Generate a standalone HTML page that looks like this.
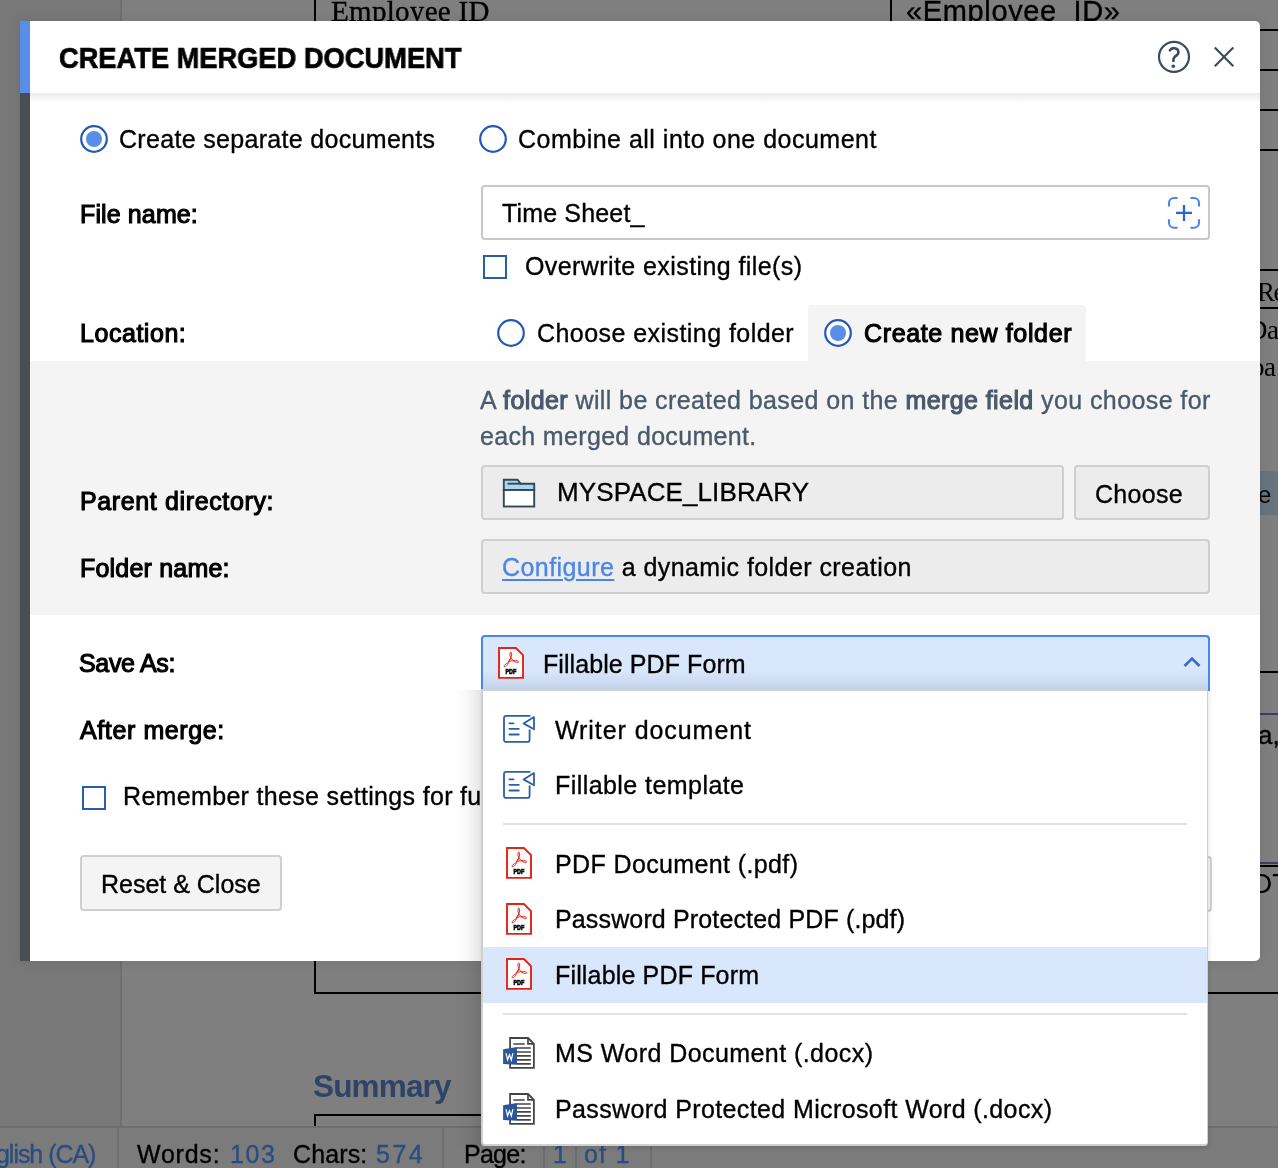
<!DOCTYPE html>
<html><head><meta charset="utf-8">
<style>
html,body{margin:0;padding:0;}
body{width:1278px;height:1168px;position:relative;overflow:hidden;background:#7f7f7f;font-family:"Liberation Sans",sans-serif;}
.t{position:absolute;white-space:pre;line-height:1;will-change:transform;}
.abs{position:absolute;}
.sb{font-weight:400;-webkit-text-stroke:1.1px currentColor;}
.hl{position:absolute;height:2px;background:#000;}
.vl{position:absolute;width:2px;background:#000;}
</style></head><body>
<!-- background canvas -->
<div class="abs" style="left:0;top:0;width:121px;height:1127px;background:#787878"></div>
<div class="abs" style="left:120px;top:0;width:2px;height:1127px;background:#6f6f6f"></div>
<div class="vl" style="left:314px;top:0;height:993px"></div>
<div class="vl" style="left:890px;top:0;height:30px"></div>
<div class="hl" style="left:314px;top:29px;width:964px"></div>
<div class="hl" style="left:314px;top:69px;width:964px"></div>
<div class="hl" style="left:314px;top:109px;width:964px"></div>
<div class="hl" style="left:314px;top:149px;width:964px"></div>
<div class="hl" style="left:314px;top:269px;width:964px"></div>
<div class="hl" style="left:1260px;top:307px;width:18px"></div>
<div class="abs" style="left:1260px;top:471px;width:18px;height:44px;background:#67737d"></div>
<div class="hl" style="left:314px;top:671px;width:964px"></div>
<div class="hl" style="left:1260px;top:713px;width:18px;background:#3e3a6a"></div>
<div class="hl" style="left:1260px;top:862px;width:18px;background:#3e3a6a"></div>
<div class="hl" style="left:1260px;top:865px;width:18px"></div>
<div class="hl" style="left:314px;top:992px;width:964px"></div>
<div class="hl" style="left:314px;top:1114px;width:700px"></div>
<div class="vl" style="left:314px;top:1114px;height:13px"></div>
<div class="t" style="left:1257px;top:278.5px;font-family:'Liberation Serif',serif;font-size:27px;letter-spacing:-1.5px">Re</div>
<div class="t" style="left:1248px;top:316.6px;font-family:'Liberation Serif',serif;font-size:27px;letter-spacing:-0.5px">Da</div>
<div class="t" style="left:1251px;top:354.4px;font-family:'Liberation Serif',serif;font-size:27px;letter-spacing:-0.5px">pa</div>
<div class="t" style="left:1258px;top:483px;font-family:'Liberation Sans',sans-serif;font-size:24px;letter-spacing:-1px">e I</div>
<div class="t" style="left:1258px;top:722px;font-family:'Liberation Sans',sans-serif;font-size:26px;-webkit-text-stroke:0.4px #000">a,</div>
<div class="t" style="left:1252px;top:870px;font-family:'Liberation Sans',sans-serif;font-size:28px;">DT</div>
<div class='t' id='bg1' style='left:330.5px;top:-2.8px;font-size:29px;font-weight:400;color:#000;font-family:"Liberation Serif", serif;letter-spacing:0.308px;-webkit-text-stroke:0.35px currentColor;'>Employee ID</div>
<div class='t' id='bg2' style='left:906.0px;top:-3.0px;font-size:29px;font-weight:400;color:#000;font-family:"Liberation Sans", sans-serif;letter-spacing:0.638px;-webkit-text-stroke:0.35px currentColor;'>«Employee_ID»</div>
<div class='t' id='bg3' style='left:313.0px;top:1071.3px;font-size:31.5px;font-weight:700;color:#2d4468;font-family:"Liberation Sans", sans-serif;letter-spacing:-0.846px;'>Summary</div>
<!-- status bar -->
<div class="abs" style="left:0;top:1126px;width:1278px;height:42px;background:#7b7b7b;border-top:2px solid #6e6e6e"></div>
<div class="abs" style="left:117px;top:1127px;width:2px;height:41px;background:#6e6e6e"></div>
<div class="abs" style="left:442px;top:1127px;width:2px;height:41px;background:#6e6e6e"></div>
<div class="abs" style="left:543px;top:1127px;width:2px;height:41px;background:#6e6e6e"></div>
<div class="abs" style="left:575px;top:1127px;width:2px;height:41px;background:#6e6e6e"></div>
<div class="abs" style="left:650px;top:1127px;width:2px;height:41px;background:#6e6e6e"></div>
<div class='t' id='st1' style='left:-4.5px;top:1141.8px;font-size:25px;font-weight:400;color:#2b4c80;font-family:"Liberation Sans", sans-serif;letter-spacing:-1.039px;-webkit-text-stroke:0.35px currentColor;'>glish (CA)</div>
<div class='t' id='st2' style='left:136.8px;top:1141.8px;font-size:25px;font-weight:400;color:#000;font-family:"Liberation Sans", sans-serif;letter-spacing:0.773px;-webkit-text-stroke:0.35px currentColor;'>Words:</div>
<div class='t' id='st3' style='left:229.8px;top:1141.8px;font-size:25px;font-weight:400;color:#2b4c80;font-family:"Liberation Sans", sans-serif;letter-spacing:1.591px;-webkit-text-stroke:0.35px currentColor;'>103</div>
<div class='t' id='st4' style='left:293.4px;top:1141.8px;font-size:25px;font-weight:400;color:#000;font-family:"Liberation Sans", sans-serif;letter-spacing:0.132px;-webkit-text-stroke:0.35px currentColor;'>Chars:</div>
<div class='t' id='st5' style='left:376.0px;top:1141.8px;font-size:25px;font-weight:400;color:#2b4c80;font-family:"Liberation Sans", sans-serif;letter-spacing:2.491px;-webkit-text-stroke:0.35px currentColor;'>574</div>
<div class='t' id='st6' style='left:463.5px;top:1141.8px;font-size:25px;font-weight:400;color:#000;font-family:"Liberation Sans", sans-serif;letter-spacing:-0.736px;-webkit-text-stroke:0.35px currentColor;'>Page:</div>
<div class='t' id='st7' style='left:552.5px;top:1141.8px;font-size:25px;font-weight:400;color:#2b4c80;font-family:"Liberation Sans", sans-serif;letter-spacing:1.094px;-webkit-text-stroke:0.35px currentColor;'>1</div>
<div class='t' id='st8' style='left:584.2px;top:1141.8px;font-size:25px;font-weight:400;color:#2b4c80;font-family:"Liberation Sans", sans-serif;letter-spacing:1.199px;-webkit-text-stroke:0.35px currentColor;'>of 1</div>

<!-- dialog -->
<div class="abs" style="left:20px;top:21px;width:1240px;height:940px;background:#fff;border-radius:0 5px 5px 0;box-shadow:0 0 12px rgba(0,0,0,0.10);overflow:hidden">
  <div class="abs" style="left:0;top:0;width:10px;height:72px;background:#588ee9"></div>
  <div class="abs" style="left:0;top:72px;width:10px;height:868px;background:#4a4e52"></div>
  <div class="abs" style="left:10px;top:72px;width:1230px;height:10px;background:linear-gradient(#ececec,rgba(255,255,255,0))"></div>
  <div class="abs" style="left:10px;top:339.5px;width:1230px;height:254.5px;background:#f4f4f4"></div>
  <div class="abs" style="left:788px;top:284px;width:278px;height:60px;background:#f4f4f4;border-radius:4px 4px 0 0"></div>
</div>
<div class='t' id='title' style='left:59.1px;top:43.0px;font-size:29.5px;font-weight:700;color:#000;font-family:"Liberation Sans", sans-serif;letter-spacing:0.000px;-webkit-text-stroke:0.7px currentColor;transform:scaleX(0.9242);transform-origin:0 0;'>CREATE MERGED DOCUMENT</div>
<!-- help + close icons -->
<svg class="abs" style="left:1150px;top:35px" width="100" height="50" viewBox="0 0 100 50">
  <circle cx="24" cy="21.8" r="15" fill="none" stroke="#3d4c5e" stroke-width="2.2"/>
  <path d="M19.9 15.3 C21 13.6 23 13 24.5 13.2 C27 13.5 28.4 15 28.4 17.2 C28.4 19.5 26.5 20.6 25 21.6 C23.8 22.5 23.4 23.5 23.4 25.3 V26" fill="none" stroke="#3d4c5e" stroke-width="2.6" stroke-linecap="round"/>
  <circle cx="23.3" cy="31.2" r="1.8" fill="#3d4c5e"/>
  <path d="M64.8 12.5 L83.3 31.3 M83.3 12.5 L64.8 31.3" stroke="#3d4c5e" stroke-width="2.2"/>
</svg>

<!-- radios row -->
<svg class="abs" style="left:78px;top:123px" width="32" height="32" viewBox="0 0 32 32"><circle cx="16" cy="16" r="12.8" fill="#fff" stroke="#2458b8" stroke-width="2.2"/><circle cx="16" cy="16" r="8" fill="#588ee9"/></svg>
<div class='t' id='r1' style='left:119.4px;top:127.1px;font-size:25px;font-weight:400;color:#000;font-family:"Liberation Sans", sans-serif;letter-spacing:0.316px;-webkit-text-stroke:0.35px currentColor;'>Create separate documents</div>
<svg class="abs" style="left:477px;top:123px" width="32" height="32" viewBox="0 0 32 32"><circle cx="16" cy="16" r="12.8" fill="#fff" stroke="#2458b8" stroke-width="2.2"/></svg>
<div class='t' id='r2' style='left:518.2px;top:127.1px;font-size:25px;font-weight:400;color:#000;font-family:"Liberation Sans", sans-serif;letter-spacing:0.491px;-webkit-text-stroke:0.35px currentColor;'>Combine all into one document</div>

<div class='t' id='l1' style='left:80.2px;top:201.5px;font-size:25px;font-weight:400;color:#000;font-family:"Liberation Sans", sans-serif;letter-spacing:0.120px;-webkit-text-stroke:1.1px currentColor;'>File name:</div>
<div class="abs" style="left:481px;top:185px;width:725px;height:51px;border:2px solid #c8c8c8;border-radius:4px;background:#fff"></div>
<div class='t' id='fn' style='left:502.1px;top:201.4px;font-size:25px;font-weight:400;color:#000;font-family:"Liberation Sans", sans-serif;letter-spacing:0.159px;-webkit-text-stroke:0.35px currentColor;'>Time Sheet_</div>
<svg class="abs" style="left:1160px;top:190px" width="48" height="46" viewBox="0 0 48 46">
  <g fill="none" stroke="#4a86e8" stroke-width="2.1" stroke-linecap="butt">
    <path d="M9 16.6 V13 a5 5 0 0 1 5 -5 H17.6"/>
    <path d="M30.4 8 H34 a5 5 0 0 1 5 5 V16.6"/>
    <path d="M9 29.2 V32.8 a5 5 0 0 0 5 5 H17.6"/>
    <path d="M30.4 37.8 H34 a5 5 0 0 0 5 -5 V29.2"/>
  </g>
  <path d="M16 22.9 H32 M24 15 V31" stroke="#2a64d2" stroke-width="2.3"/>
</svg>
<div class="abs" style="left:483px;top:255px;width:20px;height:20px;border:2px solid #2a5db0"></div>
<div class='t' id='ow' style='left:524.8px;top:253.5px;font-size:25px;font-weight:400;color:#000;font-family:"Liberation Sans", sans-serif;letter-spacing:0.415px;-webkit-text-stroke:0.35px currentColor;'>Overwrite existing file(s)</div>

<div class='t' id='l2' style='left:80.2px;top:320.6px;font-size:25px;font-weight:400;color:#000;font-family:"Liberation Sans", sans-serif;letter-spacing:0.541px;-webkit-text-stroke:1.1px currentColor;'>Location:</div>
<svg class="abs" style="left:495px;top:316.7px" width="32" height="32" viewBox="0 0 32 32"><circle cx="16" cy="16" r="12.8" fill="#fff" stroke="#2458b8" stroke-width="2.2"/></svg>
<div class='t' id='loc1' style='left:536.5px;top:320.7px;font-size:25px;font-weight:400;color:#000;font-family:"Liberation Sans", sans-serif;letter-spacing:0.444px;-webkit-text-stroke:0.35px currentColor;'>Choose existing folder</div>
<svg class="abs" style="left:822px;top:317px" width="32" height="32" viewBox="0 0 32 32"><circle cx="16" cy="16" r="12.8" fill="#fff" stroke="#2458b8" stroke-width="2.2"/><circle cx="16" cy="16" r="8" fill="#588ee9"/></svg>
<div class='t' id='loc2' style='left:863.5px;top:320.7px;font-size:25px;font-weight:400;color:#000;font-family:"Liberation Sans", sans-serif;letter-spacing:0.636px;-webkit-text-stroke:1.1px currentColor;'>Create new folder</div>

<div class='t' id='info1' style='left:480.2px;top:388.1px;font-size:25px;font-weight:400;color:#4a596b;font-family:"Liberation Sans", sans-serif;letter-spacing:0.408px;-webkit-text-stroke:0.35px currentColor;'>A <b class='sb'>folder</b> will be created based on the <b class='sb'>merge field</b> you choose for</div>
<div class='t' id='info2' style='left:480.2px;top:424.1px;font-size:25px;font-weight:400;color:#4a596b;font-family:"Liberation Sans", sans-serif;letter-spacing:0.335px;-webkit-text-stroke:0.35px currentColor;'>each merged document.</div>

<div class='t' id='l3' style='left:80.0px;top:488.9px;font-size:25px;font-weight:400;color:#000;font-family:"Liberation Sans", sans-serif;letter-spacing:0.630px;-webkit-text-stroke:1.1px currentColor;'>Parent directory:</div>
<div class="abs" style="left:481px;top:465px;width:579px;height:51px;border:2px solid #cfcfcf;border-radius:4px;background:#ececec"></div>
<svg class="abs" style="left:500px;top:476px" width="40" height="34" viewBox="0 0 40 34">
  <path d="M3.8 3.7 H17.5 L20.6 7.7 H34.2 V14 H3.8 Z" fill="#a9d6f2" stroke="#34475a" stroke-width="1.9" stroke-linejoin="miter"/>
  <path d="M7.5 7.7 H21" stroke="#34475a" stroke-width="1.9"/>
  <rect x="3.8" y="14" width="30.4" height="16.5" fill="#fff" stroke="#34475a" stroke-width="1.9"/>
</svg>
<div class='t' id='pd' style='left:556.5px;top:478.8px;font-size:26px;font-weight:400;color:#000;font-family:"Liberation Sans", sans-serif;letter-spacing:0.109px;-webkit-text-stroke:0.35px currentColor;'>MYSPACE_LIBRARY</div>
<div class="abs" style="left:1074px;top:465px;width:132px;height:51px;border:2px solid #cfcfcf;border-radius:4px;background:#ececec"></div>
<div class='t' id='choose' style='left:1095.3px;top:482.0px;font-size:25px;font-weight:400;color:#000;font-family:"Liberation Sans", sans-serif;letter-spacing:0.286px;-webkit-text-stroke:0.35px currentColor;'>Choose</div>

<div class='t' id='l4' style='left:80.0px;top:555.6px;font-size:25px;font-weight:400;color:#000;font-family:"Liberation Sans", sans-serif;letter-spacing:0.200px;-webkit-text-stroke:1.1px currentColor;'>Folder name:</div>
<div class="abs" style="left:481px;top:539px;width:725px;height:51px;border:2px solid #cfcfcf;border-radius:4px;background:#ececec"></div>
<div class='t' id='cfg' style='left:502.0px;top:555.2px;font-size:25px;font-weight:400;color:#000;font-family:"Liberation Sans", sans-serif;letter-spacing:0.433px;-webkit-text-stroke:0.35px currentColor;'><u style='color:#4a86e8;text-decoration-thickness:2px;text-underline-offset:3px'>Configure</u> a dynamic folder creation</div>

<div class='t' id='l5' style='left:79.1px;top:651.4px;font-size:25px;font-weight:400;color:#000;font-family:"Liberation Sans", sans-serif;letter-spacing:-0.325px;-webkit-text-stroke:1.1px currentColor;'>Save As:</div>
<div class="abs" style="left:481px;top:635px;width:725px;height:54px;border:2px solid #4a86e8;border-bottom:none;border-radius:4px 4px 0 0;background:linear-gradient(#d9e7fd 0%,#d9e7fd 62%,#c3d1e6 100%)"></div>
<svg class="abs" style="left:490px;top:639.6px" width="44" height="44" viewBox="0 0 44 44">
<path d="M9 8 H25.9 L33 15.1 V37.9 H9 Z" fill="#fff" stroke="#e42313" stroke-width="1.9"/>
<g fill="none" stroke="#e42313" stroke-width="0.95" stroke-linejoin="round"><path d="M20.8 17.8 C19.7 15.5 19.6 12 20.8 11.9 C22 12 21.9 15.5 20.8 17.8 L17.6 23.2 C16 23.6 13.6 25.2 14.2 26.7 C15.2 27.7 17.6 25 19.6 21 L20.8 17.8 L23.2 20.7 C25.5 22.6 28.2 23.2 28.6 22.1 C28.9 20.8 26.5 20.2 23.8 20.7 L19.6 21.1"/></g>
<text x="20.9" y="33.8" font-family="Liberation Sans" font-weight="700" font-size="7" text-anchor="middle" fill="#000" stroke="#000" stroke-width="0.6" textLength="11" lengthAdjust="spacingAndGlyphs">PDF</text></svg>
<div class='t' id='sa' style='left:543.4px;top:651.7px;font-size:25px;font-weight:400;color:#000;font-family:"Liberation Sans", sans-serif;letter-spacing:0.074px;-webkit-text-stroke:0.35px currentColor;'>Fillable PDF Form</div>
<svg class="abs" style="left:1176px;top:650px" width="32" height="24" viewBox="0 0 32 24">
  <path d="M8.5 16 L16 8.5 L23.5 16" fill="none" stroke="#3a6cc8" stroke-width="2.6"/>
</svg>

<div class='t' id='l6' style='left:80.0px;top:717.5px;font-size:25px;font-weight:400;color:#000;font-family:"Liberation Sans", sans-serif;letter-spacing:0.613px;-webkit-text-stroke:1.1px currentColor;'>After merge:</div>
<div class="abs" style="left:82px;top:786px;width:20px;height:20px;border:2px solid #2a5db0"></div>
<div class='t' id='rem' style='left:122.7px;top:784.1px;font-size:25px;font-weight:400;color:#000;font-family:"Liberation Sans", sans-serif;letter-spacing:0.328px;-webkit-text-stroke:0.35px currentColor;'>Remember these settings for fu</div>
<div class="abs" style="left:80px;top:855px;width:198px;height:52px;border:2px solid #cfcfcf;border-radius:4px;background:#f4f4f4"></div>
<div class='t' id='reset' style='left:101.2px;top:871.8px;font-size:25px;font-weight:400;color:#000;font-family:"Liberation Sans", sans-serif;letter-spacing:-0.008px;-webkit-text-stroke:0.35px currentColor;'>Reset &amp; Close</div>
<div class="abs" style="left:1100px;top:856px;width:108px;height:52px;border:2px solid #cfcfcf;border-radius:4px;background:#f4f4f4"></div>

<!-- dropdown -->
<div class="abs" style="left:456px;top:690px;width:25px;height:456px;background:linear-gradient(to right,rgba(0,0,0,0),rgba(0,0,0,0.03) 50%,rgba(0,0,0,0.10))"></div>
<div class="abs" style="left:481px;top:689px;width:724px;height:453px;background:#fff;border:2px solid #cfcfcf;border-top:2px solid #d2d2d2;border-right:1.5px solid #cfcfcf;border-bottom:2px solid #d0d0d0;border-radius:0 0 4px 4px;box-shadow:1px 2px 4px rgba(0,0,0,0.10)"></div>
<div class="abs" style="left:483px;top:947px;width:724px;height:56px;background:#d9e7fd"></div>
<div class="abs" style="left:503px;top:823px;width:684px;height:2px;background:#e2e2e2"></div>
<div class="abs" style="left:503px;top:1013px;width:684px;height:2px;background:#e2e2e2"></div>
<div class='t' id='m1' style='left:554.5px;top:717.6px;font-size:25px;font-weight:400;color:#000;font-family:"Liberation Sans", sans-serif;letter-spacing:0.933px;-webkit-text-stroke:0.35px currentColor;'>Writer document</div>
<div class='t' id='m2' style='left:554.5px;top:773.3px;font-size:25px;font-weight:400;color:#000;font-family:"Liberation Sans", sans-serif;letter-spacing:0.436px;-webkit-text-stroke:0.35px currentColor;'>Fillable template</div>
<div class='t' id='m3' style='left:554.5px;top:851.8px;font-size:25px;font-weight:400;color:#000;font-family:"Liberation Sans", sans-serif;letter-spacing:0.378px;-webkit-text-stroke:0.35px currentColor;'>PDF Document (.pdf)</div>
<div class='t' id='m4' style='left:554.5px;top:907.4px;font-size:25px;font-weight:400;color:#000;font-family:"Liberation Sans", sans-serif;letter-spacing:0.144px;-webkit-text-stroke:0.35px currentColor;'>Password Protected PDF (.pdf)</div>
<div class='t' id='m5' style='left:554.5px;top:963.0px;font-size:25px;font-weight:400;color:#000;font-family:"Liberation Sans", sans-serif;letter-spacing:0.161px;-webkit-text-stroke:0.35px currentColor;'>Fillable PDF Form</div>
<div class='t' id='m6' style='left:554.5px;top:1041.2px;font-size:25px;font-weight:400;color:#000;font-family:"Liberation Sans", sans-serif;letter-spacing:0.436px;-webkit-text-stroke:0.35px currentColor;'>MS Word Document (.docx)</div>
<div class='t' id='m7' style='left:554.5px;top:1097.1px;font-size:25px;font-weight:400;color:#000;font-family:"Liberation Sans", sans-serif;letter-spacing:0.384px;-webkit-text-stroke:0.35px currentColor;'>Password Protected Microsoft Word (.docx)</div>
<svg class="abs" style="left:498px;top:708px" width="44" height="40" viewBox="0 0 44 40"><g fill="none" stroke="#2b5fa8" stroke-width="1.8" stroke-linecap="round" stroke-linejoin="round">
<path d="M31.7 7.9 H8 a2 2 0 0 0 -2 2 V31.9 a2 2 0 0 0 2 2 H29.6 a2 2 0 0 0 2 -2 V22.2"/>
<path d="M36 9.1 L25.5 15.4 L36 21.3 Z"/>
<path d="M11.4 15.3 H15.5 M11.4 20.8 H20.8 M11.4 26.5 H20.8"/></g></svg><svg class="abs" style="left:498px;top:763.7px" width="44" height="40" viewBox="0 0 44 40"><g fill="none" stroke="#2b5fa8" stroke-width="1.8" stroke-linecap="round" stroke-linejoin="round">
<path d="M31.7 7.9 H8 a2 2 0 0 0 -2 2 V31.9 a2 2 0 0 0 2 2 H29.6 a2 2 0 0 0 2 -2 V22.2"/>
<path d="M36 9.1 L25.5 15.4 L36 21.3 Z"/>
<path d="M11.4 15.3 H15.5 M11.4 20.8 H20.8 M11.4 26.5 H20.8"/></g></svg><svg class="abs" style="left:498px;top:840px" width="44" height="44" viewBox="0 0 44 44">
<path d="M9 8 H25.9 L33 15.1 V37.9 H9 Z" fill="#fff" stroke="#e42313" stroke-width="1.9"/>
<g fill="none" stroke="#e42313" stroke-width="0.95" stroke-linejoin="round"><path d="M20.8 17.8 C19.7 15.5 19.6 12 20.8 11.9 C22 12 21.9 15.5 20.8 17.8 L17.6 23.2 C16 23.6 13.6 25.2 14.2 26.7 C15.2 27.7 17.6 25 19.6 21 L20.8 17.8 L23.2 20.7 C25.5 22.6 28.2 23.2 28.6 22.1 C28.9 20.8 26.5 20.2 23.8 20.7 L19.6 21.1"/></g>
<text x="20.9" y="33.8" font-family="Liberation Sans" font-weight="700" font-size="7" text-anchor="middle" fill="#000" stroke="#000" stroke-width="0.6" textLength="11" lengthAdjust="spacingAndGlyphs">PDF</text></svg><svg class="abs" style="left:498px;top:895.6px" width="44" height="44" viewBox="0 0 44 44">
<path d="M9 8 H25.9 L33 15.1 V37.9 H9 Z" fill="#fff" stroke="#e42313" stroke-width="1.9"/>
<g fill="none" stroke="#e42313" stroke-width="0.95" stroke-linejoin="round"><path d="M20.8 17.8 C19.7 15.5 19.6 12 20.8 11.9 C22 12 21.9 15.5 20.8 17.8 L17.6 23.2 C16 23.6 13.6 25.2 14.2 26.7 C15.2 27.7 17.6 25 19.6 21 L20.8 17.8 L23.2 20.7 C25.5 22.6 28.2 23.2 28.6 22.1 C28.9 20.8 26.5 20.2 23.8 20.7 L19.6 21.1"/></g>
<text x="20.9" y="33.8" font-family="Liberation Sans" font-weight="700" font-size="7" text-anchor="middle" fill="#000" stroke="#000" stroke-width="0.6" textLength="11" lengthAdjust="spacingAndGlyphs">PDF</text></svg><svg class="abs" style="left:498px;top:951.2px" width="44" height="44" viewBox="0 0 44 44">
<path d="M9 8 H25.9 L33 15.1 V37.9 H9 Z" fill="#fff" stroke="#e42313" stroke-width="1.9"/>
<g fill="none" stroke="#e42313" stroke-width="0.95" stroke-linejoin="round"><path d="M20.8 17.8 C19.7 15.5 19.6 12 20.8 11.9 C22 12 21.9 15.5 20.8 17.8 L17.6 23.2 C16 23.6 13.6 25.2 14.2 26.7 C15.2 27.7 17.6 25 19.6 21 L20.8 17.8 L23.2 20.7 C25.5 22.6 28.2 23.2 28.6 22.1 C28.9 20.8 26.5 20.2 23.8 20.7 L19.6 21.1"/></g>
<text x="20.9" y="33.8" font-family="Liberation Sans" font-weight="700" font-size="7" text-anchor="middle" fill="#000" stroke="#000" stroke-width="0.6" textLength="11" lengthAdjust="spacingAndGlyphs">PDF</text></svg><svg class="abs" style="left:498px;top:1030px" width="44" height="44" viewBox="0 0 44 44">
<path d="M12.1 8 H30.1 L35.9 13.8 V37.9 H12.1 Z" fill="#fff" stroke="#454545" stroke-width="1.8"/>
<path d="M30 8 V13.9 H35.9" fill="none" stroke="#454545" stroke-width="1.7"/>
<path d="M15.3 14 H26.7 M19 18 H32.8 M19 22 H32.8 M19 25.9 H32.8 M19 29.9 H32.8 M19 33.9 H32.8" stroke="#454545" stroke-width="1.6"/>
<path d="M5.1 19.2 L19 17.1 V34.7 L5.1 33.9 Z" fill="#2b579a"/>
<path d="M8 23.2 L9.6 30 L11.5 24.8 L13.3 30 L14.9 23.2" fill="none" stroke="#fff" stroke-width="1.2"/></svg><svg class="abs" style="left:498px;top:1085.9px" width="44" height="44" viewBox="0 0 44 44">
<path d="M12.1 8 H30.1 L35.9 13.8 V37.9 H12.1 Z" fill="#fff" stroke="#454545" stroke-width="1.8"/>
<path d="M30 8 V13.9 H35.9" fill="none" stroke="#454545" stroke-width="1.7"/>
<path d="M15.3 14 H26.7 M19 18 H32.8 M19 22 H32.8 M19 25.9 H32.8 M19 29.9 H32.8 M19 33.9 H32.8" stroke="#454545" stroke-width="1.6"/>
<path d="M5.1 19.2 L19 17.1 V34.7 L5.1 33.9 Z" fill="#2b579a"/>
<path d="M8 23.2 L9.6 30 L11.5 24.8 L13.3 30 L14.9 23.2" fill="none" stroke="#fff" stroke-width="1.2"/></svg>
</body></html>
